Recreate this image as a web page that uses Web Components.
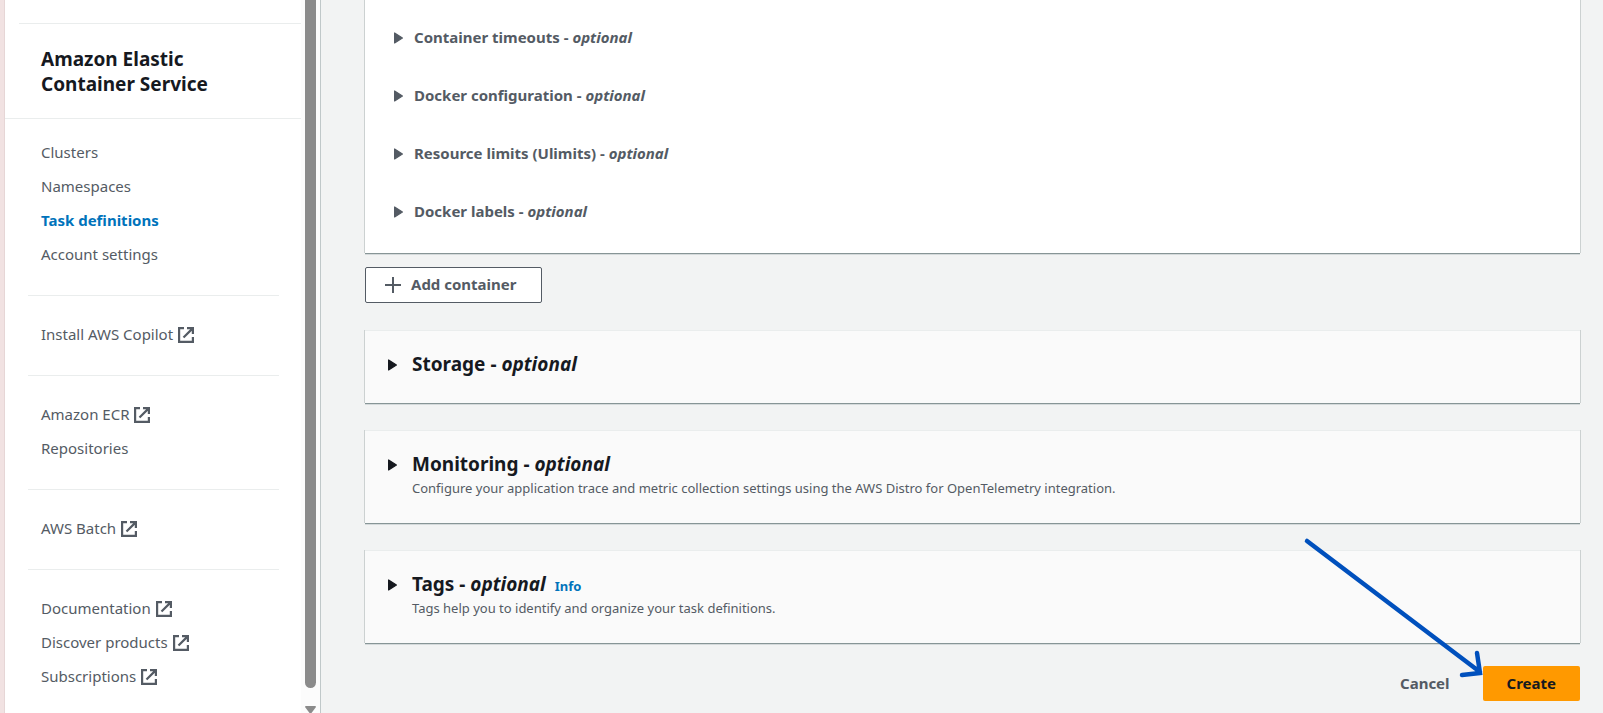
<!DOCTYPE html>
<html lang="en">
<head>
<meta charset="utf-8">
<title>Create task definition | Elastic Container Service</title>
<style>
  html, body { margin: 0; height: 100%; }
  body { font-family: "Noto Sans", "Open Sans", sans-serif; font-size: 15px; color: #545b64; background: #f2f3f3; overflow: hidden; }
</style>
</head>
<body>
<ecs-console>
  <ecs-sidebar slot="nav">
    <span slot="title">Amazon Elastic<br>Container Service</span>
    <nav-group>
      <nav-link>Clusters</nav-link>
      <nav-link>Namespaces</nav-link>
      <nav-link current>Task definitions</nav-link>
      <nav-link>Account settings</nav-link>
    </nav-group>
    <nav-group>
      <nav-link external>Install AWS Copilot</nav-link>
    </nav-group>
    <nav-group>
      <nav-link external>Amazon ECR</nav-link>
      <nav-link>Repositories</nav-link>
    </nav-group>
    <nav-group>
      <nav-link external>AWS Batch</nav-link>
    </nav-group>
    <nav-group>
      <nav-link external>Documentation</nav-link>
      <nav-link external>Discover products</nav-link>
      <nav-link external>Subscriptions</nav-link>
    </nav-group>
  </ecs-sidebar>

  <container-card>
    <expand-row>Container timeouts</expand-row>
    <expand-row>Docker configuration</expand-row>
    <expand-row>Resource limits (Ulimits)</expand-row>
    <expand-row>Docker labels</expand-row>
  </container-card>
  <add-button>Add container</add-button>
  <section-stack>
    <section-card>Storage</section-card>
    <section-card>Monitoring<span slot="description">Configure your application trace and metric collection settings using the AWS Distro for OpenTelemetry integration.</span></section-card>
    <section-card info>Tags<span slot="description">Tags help you to identify and organize your task definitions.</span></section-card>
  </section-stack>
  <form-actions></form-actions>
</ecs-console>

<script>
const define = (name, html) => customElements.define(name, class extends HTMLElement {
  constructor() {
    super();
    this.attachShadow({ mode: 'open' }).innerHTML =
      typeof html === 'function' ? html(this) : html;
  }
});

const caret = `<svg class="caret" width="9" height="12" viewBox="0 0 9 12" aria-hidden="true"><path d="M.6 1v10L8.400 6z" fill="currentColor" stroke="currentColor" stroke-width="1.200" stroke-linejoin="round"/></svg>`;

const cardShadow = `box-shadow: 0 1px 0 #879596, 0 2px 0 #d5dadb, -1px 0 0 #ccd1d1, 1px 0 0 #ccd1d1;`;

define('ecs-console', `
  <style>
    :host { display: flex; height: 100vh; overflow: hidden; }
    .edge { flex: none; width: 4px; background: #f1e2e2; border-right: 1px solid #e6d6d6; }
    main { flex: 1; min-width: 0; padding: 0 23px 0 44px; }
  </style>
  <div class="edge"></div>
  <slot name="nav"></slot>
  <main><slot></slot></main>
`);

define('ecs-sidebar', `
  <style>
    :host { display: flex; flex: none; width: 315px; background: #fff; border-right: 1px solid #c0c8c9; }
    nav { flex: 1; overflow: hidden; }
    .top { height: 23px; margin-left: 14px; border-bottom: 1px solid #eaeded; }
    h2 { margin: 0; padding: 23px 36px 21px; font-size: 19px; line-height: 25px; color: #16191f; border-bottom: 1px solid #eaeded; }
    .groups { padding: 16px 22px 0 23px; }
    .scroll { display: flex; flex-direction: column; gap: 18px; box-sizing: border-box; width: 19px; padding-left: 4px; background: #fcfcfc; }
    .thumb { flex: 1; width: 11px; background: #8b8b8b; border-radius: 0 0 6px 6px; }
    svg { flex: none; display: block; }
  </style>
  <nav aria-label="Service">
    <div class="top"></div>
    <h2><slot name="title"></slot></h2>
    <div class="groups"><slot></slot></div>
  </nav>
  <div class="scroll" aria-hidden="true">
    <div class="thumb"></div>
    <svg width="11" height="7" viewBox="0 0 11 7"><path d="M.5 0h10l.5 1L6.500 7h-2L0 1z" fill="#8b8b8b"/></svg>
  </div>
`);

define('nav-group', `
  <style>
    :host { display: block; padding: 0 13px 24px; }
    :host(:not(:first-of-type)) { border-top: 1px solid #eaeded; padding-top: 21px; }
  </style>
  <slot></slot>
`);

define('nav-link', el => `
  <style>
    :host { display: block; line-height: 34px; }
    a { display: flex; align-items: center; gap: 5px; color: #545b64; text-decoration: none; white-space: nowrap; }
    :host([current]) a { color: #0073bb; font-weight: 700; }
    svg { flex: none; margin-top: 2px; }
  </style>
  <a href="#"${el.hasAttribute('current') ? ' aria-current="page"' : ''}><slot></slot>${el.hasAttribute('external') ? `
    <svg width="16" height="16" viewBox="0 0 16 16" fill="none" stroke="currentColor" stroke-width="2.200" aria-hidden="true"><path d="M6 1.100H1.100v13.800h13.800V10M9 1.100h5.900V7M14.900 1.100 5.500 10.500"/></svg>` : ''}</a>
`);

define('container-card', `
  <style>
    :host { display: flex; flex-direction: column; gap: 34px; padding: 25px 29px 30px; background: #fff; ${cardShadow} }
  </style>
  <slot></slot>
`);

define('expand-row', `
  <style>
    :host { display: block; line-height: 24px; font-weight: 700; color: #545b64; }
    summary { display: flex; align-items: center; gap: 11px; list-style: none; cursor: pointer; }
    .caret { flex: none; margin-top: 2px; }
  </style>
  <details><summary>${caret}<span><slot></slot> - <em>optional</em></span></summary></details>
`);

define('add-button', `
  <style>
    :host { display: block; padding: 14px 0 27px; }
    button { display: flex; align-items: center; justify-content: center; gap: 10px; height: 36px; padding: 0 24px 2px 19px; font: 700 15px/24px "Noto Sans", "Open Sans", sans-serif; color: #545b64; background: #fff; border: 1px solid #545b64; border-radius: 2px; }
    svg { margin-top: 2px; }
  </style>
  <button type="button"><svg width="16" height="16" viewBox="0 0 16 16" fill="none" stroke="currentColor" stroke-width="2" aria-hidden="true"><path d="M0 8h16M8 0v16"/></svg><slot></slot></button>
`);

define('section-stack', `
  <style>:host { display: flex; flex-direction: column; gap: 27px; }</style>
  <slot></slot>
`);

define('section-card', el => `
  <style>
    :host { display: block; padding: 21px 23px 26px; background: #fafafa; border-top: 1px solid #eaeded; ${cardShadow} }
    summary { display: grid; grid-template-columns: 9px 1fr; column-gap: 15px; align-items: center; list-style: none; cursor: pointer; }
    .caret { color: #16191f; }
    .head { display: flex; align-items: baseline; gap: 9px; }
    h2 { margin: 0; font-size: 19px; line-height: 25px; color: #16191f; }
    a { font-size: 13px; font-weight: 700; color: #0073bb; text-decoration: none; }
    .description { grid-column: 2; font-size: 13px; line-height: 18px; }
    ::slotted([slot=description]) { display: block; padding-top: 2px; }
  </style>
  <details><summary>${caret}<div class="head"><h2><slot></slot> - <em>optional</em></h2>${el.hasAttribute('info') ? '<a href="#">Info</a>' : ''}</div><div class="description"><slot name="description"></slot></div></summary></details>
`);

define('form-actions', `
  <style>
    :host { display: flex; justify-content: flex-end; position: relative; padding-top: 23px; }
    button { height: 35px; border: 0; border-radius: 2px; font: 700 15px/24px "Noto Sans", "Open Sans", sans-serif; color: #545b64; background: none; padding: 0 33px 2px; }
    .primary { padding: 0 24px 2px; background: #ff9900; color: #16191f; }
    svg { position: absolute; right: 94px; bottom: 22px; pointer-events: none; }
  </style>
  <button type="button">Cancel</button>
  <button type="submit" class="primary">Create</button>
  <svg width="184" height="144" viewBox="0 0 184 144" fill="none" stroke="#0050bd" stroke-width="4.500" stroke-linecap="round" aria-hidden="true"><path d="M5 6 178 137M175 118l3 20-18 2"/></svg>
`);
</script>
</body>
</html>
